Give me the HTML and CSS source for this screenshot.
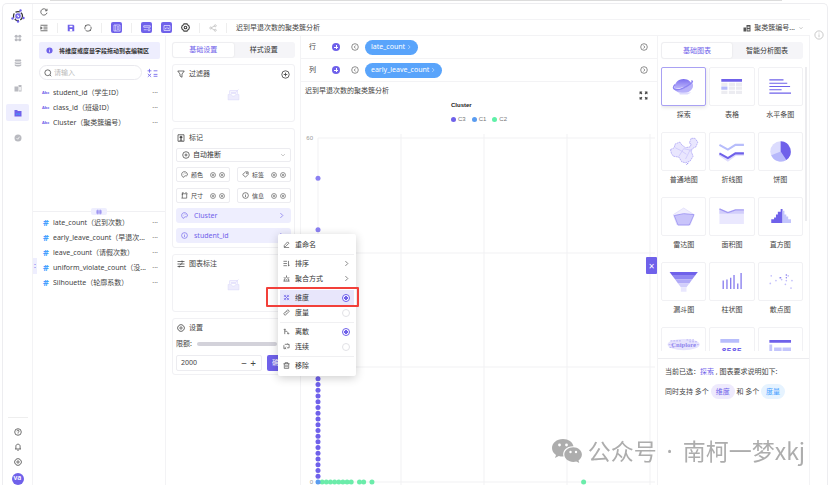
FILE: index.html
```html
<!DOCTYPE html>
<html lang="zh-CN">
<head>
<meta charset="utf-8">
<title>迟到早退次数的聚类簇分析</title>
<link rel="stylesheet" href="styles.css">
</head>
<body>
<svg class="defs" aria-hidden="true">
  <symbol id="i-plus" viewBox="0 0 16 16"><circle cx="8" cy="8" r="6.6"/><path d="M8 4.8v6.4M4.8 8h6.4"/></symbol>
  <symbol id="i-left" viewBox="0 0 16 16"><circle cx="8" cy="8" r="6.6"/><path d="M9.4 5 6.4 8l3 3"/></symbol>
  <symbol id="i-right" viewBox="0 0 16 16"><circle cx="8" cy="8" r="6.6"/><path d="M6.8 5l3 3-3 3"/></symbol>
  <symbol id="i-info" viewBox="0 0 16 16"><circle cx="8" cy="8" r="6.6"/><path d="M8 7v4.6M8 4.2v1.4"/></symbol>
  <symbol id="i-target" viewBox="0 0 16 16"><circle cx="8" cy="8" r="6.6"/><circle cx="8" cy="8" r="2"/></symbol>
  <symbol id="i-chev" viewBox="0 0 16 16"><path d="M5.5 2.5 11 8l-5.500 5.500"/></symbol>
  <symbol id="i-gear" viewBox="0 0 16 16"><path d="M5.300 1.500h5.400l.8 1.900 2.100.8L15 8l-1.400 3.800-2.100.8-.8 1.900H5.300l-.8-1.900-2.100-.8L1 8l1.400-3.800 2.100-.8z"/><circle cx="8" cy="8" r="2.300"/></symbol>
  <symbol id="i-palette" viewBox="0 0 16 16"><path d="M8 1.500C4 1.500 1.300 4.500 1.500 8s2 6 4.500 6.300c1.600.2 1.200-2.300 2.200-3 1.500-1 5 1 6.100-1.500C15.700 6 12.500 1.500 8 1.500z"/><path d="M4.500 7.500h1M7 4.500h1M10.500 5.500h1"/></symbol>
  <symbol id="i-tag" viewBox="0 0 16 16"><path d="M8 2h6v6l-6 6-6.500-6z"/><circle cx="11" cy="5" r="1"/></symbol>
  <symbol id="i-size" viewBox="0 0 16 16"><path d="M3 4h10v10H3zM3 7V1.500h3M10 1.500h3M13 4h2M1 14h2"/></symbol>
</svg>

<div class="topstrip"></div>
<div class="app">
  <nav class="rail" aria-label="主导航">
    <svg class="logo" viewBox="0 0 28 28"><circle cx="14" cy="14" r="9" fill="none" stroke="#333" stroke-width="2.500" stroke-dasharray="9 3"/><circle cx="14" cy="14" r="4" fill="none" stroke="#6f61ea" stroke-width="3"/><path d="m8 20 12-13" stroke="#6f61ea" stroke-width="1.500"/><circle cx="19" cy="3" r="2.400" fill="#6f61ea"/><circle cx="3" cy="19" r="2.400" fill="#6f61ea"/><circle cx="25" cy="18" r="2.400" fill="#6f61ea"/><circle cx="14" cy="25" r="2.400" fill="#6f61ea"/></svg>
    <a href="#" aria-label="应用"><svg viewBox="0 0 16 16" class="solid"><circle cx="4.500" cy="4.500" r="3.200"/><circle cx="11.500" cy="4.500" r="3.200"/><circle cx="4.500" cy="11.500" r="3.200"/><circle cx="11.500" cy="11.500" r="3.200"/></svg></a>
    <a href="#" aria-label="数据"><svg viewBox="0 0 16 16" class="solid"><rect x="1.500" y="1" width="13" height="4" rx="2"/><path d="M1.500 5.800c3 1.700 10 1.700 13 0v3.400c-3 1.700-10 1.700-13 0zM1.500 10.600c3 1.700 10 1.700 13 0V13c-2 2.500-11 2.500-13 0z"/></svg></a>
    <a href="#" aria-label="模型"><svg viewBox="0 0 16 16" class="solid"><path d="M1 5h7v10H1zM9 2h6v13H9z"/><path d="M10.500 6h3v7h-3z" fill="#fff"/></svg></a>
    <a href="#" aria-label="分析" class="active"><svg viewBox="0 0 16 16"><path d="M1 2h5l2 2h7v11H1z" fill="#6f61ea"/><path d="M5 12V9M8 12V8M11 12V9" stroke="#35a7ff" stroke-width="1.500"/></svg></a>
    <a href="#" aria-label="监控"><svg viewBox="0 0 16 16"><circle cx="8" cy="8" r="7" fill="#b9bac0"/><path d="m5 8 2.500 2.500L11 5.500" fill="none" stroke="#fff" stroke-width="1.500"/></svg></a>
    <div class="rail-foot">
      <a href="#" aria-label="帮助"><svg viewBox="0 0 16 16" class="line"><circle cx="8" cy="8" r="6.600"/><path d="M5.800 6.500c0-3 4.400-2.700 4.400-.2C10.200 8 8 7.800 8 9.700M8 11v1.400"/></svg></a>
      <a href="#" aria-label="通知"><svg viewBox="0 0 16 16" class="line"><path d="M2 12h12M3.800 12V6.500c0-5.500 8.400-5.500 8.400 0V12M6.500 14.500h3"/></svg></a>
      <a href="#" aria-label="设置"><svg class="line"><use href="#i-gear"/></svg></a>
      <a href="#" class="avatar">va</a>
    </div>
  </nav>

  <div class="main">
    <header class="refresh"><button aria-label="刷新"><svg viewBox="0 0 16 16" class="line"><path d="M13.500 5A6.300 6.300 0 1 0 14 9.500M14 1.500V5.500h-4"/></svg></button></header>
    <div class="toolbar">
      <button aria-label="折叠"><svg viewBox="0 0 16 16" class="line"><path d="M1 2.500h14M7 6.200h8M7 9.800h8M1 13.500h14M1.500 5.500 4.500 8l-3 2.500z"/></svg></button>
      <i></i>
      <button aria-label="保存"><svg viewBox="0 0 16 16"><path d="M1.500 1.500h11l2 2v11h-13z" fill="#6f61ea"/><path d="M5 3.500h6v3H5zM5.500 10h5v4.500h-5z" fill="#fff"/></svg></button>
      <button aria-label="撤销"><svg viewBox="0 0 16 16" class="line"><path d="M2 10A6.300 6.300 0 0 1 8 1.700M14 6a6.300 6.300 0 0 1-6 8.300M5 3.500 2 3M11 12.500l3 .5M8 1.700c3 0 4.500 1.200 5.500 3M8 14.300c-3 0-4.500-1.200-5.500-3"/></svg></button>
      <i></i>
      <button class="on" aria-label="数据面板"><svg viewBox="0 0 16 16" class="line"><path d="M2 2h12v12H2zM5.500 2v12M8 5.500h4M8 8h4M8 10.500h4"/></svg></button>
      <i></i>
      <button class="on" aria-label="设置面板"><svg viewBox="0 0 16 16" class="line"><path d="M1.500 3.500h13v3h-13zM1.500 11.500h6"/><circle cx="12" cy="11.500" r="2.200"/></svg></button>
      <button class="on" aria-label="图表面板"><svg viewBox="0 0 16 16" class="line"><path d="M2 3h12v10H2zM5 10.500v-3M8 10.500v-5M11 10.500v-3"/></svg></button>
      <button aria-label="选项"><svg class="line bold"><use href="#i-gear"/></svg></button>
      <i></i>
      <button aria-label="分享"><svg viewBox="0 0 16 16" class="line pale"><circle cx="3.500" cy="8" r="2"/><circle cx="12.500" cy="3.500" r="2"/><circle cx="12.500" cy="12.500" r="2"/><path d="m5.300 7 5.400-2.700M5.300 9l5.400 2.700"/></svg></button>
      <i></i>
      <span class="doc-title">迟到早退次数的聚类簇分析</span>
      <button class="dataset"><svg viewBox="0 0 16 16"><path d="M1 7h5v8H1zM7 2h8v13H7z" fill="#555"/><path d="M9 5h4v3H9zM9 10h4v3H9z" fill="#ddd"/></svg>聚类簇编号...<svg viewBox="0 0 16 16" class="line tiny"><path d="m4 6 4 4 4-4"/></svg></button>
    </div>

    <div class="columns">
      <section class="fields">
        <p class="hint"><svg viewBox="0 0 16 16"><circle cx="8" cy="8" r="7" fill="#6f61ea"/><path d="M8 7v5M8 4v1.500" stroke="#fff" stroke-width="1.600"/></svg>将维度或度量字段拖动到表编辑区</p>
        <div class="search-row">
          <label class="search"><svg viewBox="0 0 16 16" class="line"><circle cx="7.500" cy="7.500" r="5.800"/><path d="m12 12 2.500 2.500"/></svg><input type="search" placeholder="请输入" aria-label="搜索字段"></label>
          <button aria-label="新建计算字段"><svg viewBox="0 0 20 16"><path d="M1 4h7M4.500 .5v7M12 4h7M1.500 9.500l6 5.500M7.500 9.500l-6 5.500M12 10.500h7M12 14h7" stroke="#6f61ea" stroke-width="1.500"/></svg></button>
        </div>
        <ul class="field-list dims">
          <li><b>Abc</b><span>student_id（学生ID）</span><button aria-label="更多">···</button></li>
          <li><b>Abc</b><span>class_id（班级ID）</span><button aria-label="更多">···</button></li>
          <li><b>Abc</b><span>Cluster（聚类簇编号）</span><button aria-label="更多">···</button></li>
        </ul>
        <div class="splitter"><span class="grip"><svg viewBox="0 0 16 10"><path d="M3 3.500h10M3 6.500h10M6 1v8M10 1v8" stroke="#6f61ea"/></svg></span></div>
        <ul class="field-list meas">
          <li><b>#</b><span>late_count（迟到次数）</span><button aria-label="更多">···</button></li>
          <li><b>#</b><span>early_leave_count（早退次...</span><button aria-label="更多">···</button></li>
          <li><b>#</b><span>leave_count（请假次数）</span><button aria-label="更多">···</button></li>
          <li><b>#</b><span>uniform_violate_count（没...</span><button aria-label="更多">···</button></li>
          <li><b>#</b><span>Silhouette（轮廓系数）</span><button aria-label="更多">···</button></li>
        </ul>
        <button class="fold" aria-label="收起">:</button>
      </section>

      <section class="config">
        <div class="tabs"><button class="sel">基础设置</button><button>样式设置</button></div>
        <div class="card tall">
          <h2><svg viewBox="0 0 16 16" class="line"><path d="M1.500 2h13L10 8v6.500L6 12V8z"/></svg>过滤器<button aria-label="添加过滤器"><svg class="line"><use href="#i-plus"/></svg></button></h2>
          <svg class="empty" viewBox="0 0 24 22"><path d="M2 10h6l2 3h4l2-3h6v10H2z" fill="#eeecfd" stroke="#dcd9fa"/><path d="M5 9V3h14v6M17 5l4-4" fill="none" stroke="#dcd9fa" stroke-width="1.500"/><path d="M7 5h10v4H7z" fill="#e6e3fc"/></svg>
        </div>
        <div class="card marks">
          <h2><svg viewBox="0 0 16 16" class="line"><path d="M2 1.500h12v13H2zM8 9v5.500M5 14.500 8 11l3 3.500"/><circle cx="8" cy="6.500" r="2.200" fill="#444"/></svg>标记</h2>
          <label class="select"><svg class="line"><use href="#i-target"/></svg><select aria-label="图形类型"><option>自动推断</option></select><svg viewBox="0 0 16 16" class="line tiny"><path d="m3 5.500 5 5 5-5"/></svg></label>
          <div class="channels">
            <div><svg class="line"><use href="#i-palette"/></svg>颜色<button aria-label="添加颜色"><svg class="line"><use href="#i-plus"/></svg></button><button aria-label="颜色设置"><svg class="line"><use href="#i-target"/></svg></button></div>
            <div><svg class="line"><use href="#i-tag"/></svg>标签<button aria-label="添加标签"><svg class="line"><use href="#i-plus"/></svg></button><button aria-label="标签设置"><svg class="line"><use href="#i-target"/></svg></button></div>
            <div><svg class="line"><use href="#i-size"/></svg>尺寸<button aria-label="添加尺寸"><svg class="line"><use href="#i-plus"/></svg></button><button aria-label="尺寸设置"><svg class="line"><use href="#i-target"/></svg></button></div>
            <div><svg class="line"><use href="#i-info"/></svg>信息<button aria-label="添加信息"><svg class="line"><use href="#i-plus"/></svg></button><button aria-label="信息设置"><svg class="line"><use href="#i-target"/></svg></button></div>
          </div>
          <button class="pill"><svg class="line"><use href="#i-palette"/></svg><span>Cluster</span><svg class="line"><use href="#i-chev"/></svg></button>
          <div class="pill-wrap">
            <button class="pill"><svg class="line"><use href="#i-info"/></svg><span>student_id</span><svg class="line"><use href="#i-chev"/></svg></button>
            <div class="menu">
              <button><svg viewBox="0 0 16 16" class="line"><path d="m3 10 7.500-8 3 3L6 12.500l-3.500.5zM2 15h12"/></svg><span>重命名</span></button>
              <hr>
              <button><svg viewBox="0 0 16 16" class="line"><path d="M1 3h8M1 8h8M1 13h8M12.500 2v12M15 11l-2.500 3"/></svg><span>排序</span><svg class="line arrow"><use href="#i-chev"/></svg></button>
              <button><svg viewBox="0 0 16 16" class="line"><path d="M1 14h14M3 14V9l5-4 5 4v5M8 1v4M2 5l2 2M14 5l-2 2M6 11h4"/></svg><span>聚合方式</span><svg class="line arrow"><use href="#i-chev"/></svg></button>
              <hr>
              <label class="current"><svg viewBox="0 0 16 16" class="line"><path d="M2 2l12 12M14 2 2 14M6 2v3.500H2M10 2v3.500h4M6 14v-3.500H2M10 14v-3.500h4"/></svg><span>维度</span><input type="radio" name="role" checked></label>
              <label><svg viewBox="0 0 16 16" class="line"><path d="m1.500 11 9.500-9.500L14.500 5 5 14.500zM5 8l2 2M8 5l2 2"/></svg><span>度量</span><input type="radio" name="role"></label>
              <hr>
              <label><svg viewBox="0 0 16 16" class="line"><path d="M4 2v12M4 7c5 0 8 2 8 7M2 4l2-2 2 2M10 12l2 2 2-2"/></svg><span>离散</span><input type="radio" name="kind" checked></label>
              <label><svg viewBox="0 0 16 16" class="line"><path d="M4 3h10v8H9M5 13H2V5M7 8.500l-2.500 2.500L7 14M12 3l-2-2"/></svg><span>连续</span><input type="radio" name="kind"></label>
              <hr>
              <button><svg viewBox="0 0 16 16" class="line"><path d="M1 4h14M5 4V1.500h6V4M3 4v10.500h10V4M6.500 7v5M9.500 7v5"/></svg><span>移除</span></button>
            </div>
          </div>
        </div>
        <div class="card tall">
          <h2><svg viewBox="0 0 16 16" class="line"><path d="M1 3h14M1 8h14M1 13h14M10 1v4M4.500 11v4M11 6 6 10"/></svg>图表标注</h2>
          <svg class="empty" viewBox="0 0 24 22"><path d="M2 10h6l2 3h4l2-3h6v10H2z" fill="#eeecfd" stroke="#dcd9fa"/><path d="M5 9V3h14v6M17 5l4-4" fill="none" stroke="#dcd9fa" stroke-width="1.500"/><path d="M7 5h10v4H7z" fill="#e6e3fc"/></svg>
        </div>
        <div class="card limit">
          <h2><svg class="line"><use href="#i-gear"/></svg>设置</h2>
          <label class="range">限额:<input type="range" aria-label="限额"></label>
          <div class="amount"><label><input type="text" value="2000" aria-label="限额数值"><button aria-label="减少">−</button><button aria-label="增加">+</button></label><button class="ok">确定</button></div>
        </div>
      </section>

      <section class="canvas">
        <div class="shelf"><span>行</span><button aria-label="添加行字段"><svg class="line fill"><use href="#i-plus"/></svg></button><button aria-label="向左"><svg class="line"><use href="#i-left"/></svg></button><button class="chip">late_count<svg class="line"><use href="#i-chev"/></svg></button><button class="end" aria-label="向右"><svg class="line"><use href="#i-right"/></svg></button></div>
        <div class="shelf"><span>列</span><button aria-label="添加列字段"><svg class="line fill"><use href="#i-plus"/></svg></button><button aria-label="向左"><svg class="line"><use href="#i-left"/></svg></button><button class="chip">early_leave_count<svg class="line"><use href="#i-chev"/></svg></button><button class="end" aria-label="向右"><svg class="line"><use href="#i-right"/></svg></button></div>
        <div class="chart-head"><h1>迟到早退次数的聚类簇分析</h1><button aria-label="全屏"><svg viewBox="0 0 16 16"><path d="M1 6V1h5L4.500 2.500 6 4 4 6 2.500 4.500zM10 1h5v5l-1.500-1.500L12 6l-2-2 1.500-1.500zM1 10v5h5l-1.500-1.500L6 12l-2-2-1.500 1.500zM15 10v5h-5l1.500-1.500L10 12l2-2 1.500 1.500z" fill="#444"/></svg></button></div>
        <div class="legend"><strong>Cluster</strong><ul><li class="c3">C3</li><li class="c1">C1</li><li class="c2">C2</li></ul></div>
        <svg class="plot" viewBox="0 0 356 362" role="img" aria-label="聚类散点图">
          <path class="grid" d="M17 8v347M100 4v351M183 4v351M266 4v351M349 4v351M17 8h337M17 123h337M17 237h337M17 352h337"/>
          <g class="axis"><text x="12" y="10" text-anchor="end">60</text><text x="12" y="354" text-anchor="end">0</text><text x="17" y="361" text-anchor="middle">0</text><text x="100" y="361" text-anchor="middle">20</text><text x="183" y="361" text-anchor="middle">40</text><text x="266" y="361" text-anchor="middle">60</text><text x="349" y="361" text-anchor="middle">80</text></g>
          <g id="points"></g>
        </svg>
        <button class="close" aria-label="关闭图表面板">×</button>
      </section>

      <aside class="gallery">
        <div class="tabs"><button class="sel">基础图表</button><button>智能分析图表</button></div>
        <div class="tiles">
          <button class="picked"><svg viewBox="0 0 46 38"><defs><linearGradient id="g" x2="0" y2="1"><stop stop-color="#7b6ef0"/><stop offset="1" stop-color="#c3bdfb"/></linearGradient></defs><path d="M13 22c0-7 4-11 10-11 5 0 8 3 9 7z" fill="url(#g)"/><path d="M13 21c8 2 14-1 19-6 3 4-1 11-9 11-5 0-9-2-10-5z" fill="#b8b1fa"/><path d="M14 17c-5 5 1 7 8 4s13-8 9-8" fill="none" stroke="#8e84f3" stroke-width="1.500"/><path d="M18 25.500h13l-4 2h-8z" fill="#dcd9fd"/></svg><span>探索</span></button>
          <button><svg viewBox="0 0 46 38"><path d="M12 11h22v3H12z" fill="#6f61ea"/><path d="M12 15h6.500v3.500H12zM20 15h6.500v3.500H20zM27.500 15H34v3.500h-6.500zM20 19h6.500v3.500H20zM27.500 19H34v3.500h-6.500zM12 23.500h6.500V27H12zM20 23.500h6.500V27H20zM27.500 23.500H34V27h-6.500z" fill="#ececf1"/><path d="M12 19h6.500v3.500H12z" fill="#b7bdfb"/></svg><span>表格</span></button>
          <button><svg viewBox="0 0 46 38"><path d="M11 12h15M11 15.500h19M11 19h22M11 22.500h13M11 26h23" stroke="#6f61ea" stroke-width="1.200"/></svg><span>水平条图</span></button>
          <button><svg viewBox="0 0 46 38"><path d="m9 17 4-2 1-4 5-2 2 3 4 3 5-1 1-3-2-1 2-5h4l3 4-2 5-4 2-1 3 2 5-3 5-5 2-4-1-3-5-6-1-2-3z" fill="#e9e6fe" stroke="#aaa1f4" stroke-width=".8" stroke-dasharray="2 .6"/><path d="m14 15 6 3 6 4M18 24l5-8 9 2M30 17l-5 10" fill="none" stroke="#c5bffa" stroke-width=".7"/><path d="m28 31-2 2" stroke="#8e84f3"/></svg><span>普通地图</span></button>
          <button><svg viewBox="0 0 46 38"><path d="m10 12 9 5 8-5h9" fill="none" stroke="#b7bdfb" stroke-width="2.200"/><path d="m10 22 9 6 8-6h9" fill="none" stroke="#dedbfd" stroke-width="3"/><path d="m10 21 9 5 8-5h9" fill="none" stroke="#6f61ea" stroke-width="2.200"/></svg><span>折线图</span></button>
          <button><svg viewBox="0 0 46 38"><circle cx="23" cy="19" r="11" fill="#dcdcfe"/><path d="M23 19 13 23a11 11 0 0 0 16 5z" fill="#b7b8fb"/><path d="M23 19V8a11 11 0 0 1 6 20z" fill="#6f61ea"/></svg><span>饼图</span></button>
          <button><svg viewBox="0 0 46 38"><path d="m23 10 11 7-4 11H16l-4-11z" fill="#f1effe" stroke="#dcd9fa" stroke-width=".7"/><path d="m13 18 10-2 11 1-5 11H17z" fill="#c9c4fa" stroke="#a39af3"/></svg><span>雷达图</span></button>
          <button><svg viewBox="0 0 46 38"><path d="m10 11 9 5 8-4h9v15H10z" fill="#eae8fe"/><path d="m10 11 9 5 8-4h9v4H10z" fill="#d2cefb"/><path d="m10 11 9 4 8-3h9" fill="none" stroke="#a39af3" stroke-width="1.500"/></svg><span>面积图</span></button>
          <button><svg viewBox="0 0 46 38"><path d="M13 26v-4h3v-2h2v-3h2v-3h3v-3h2v15z" fill="#6f61ea"/><path d="M25 26V13h2v4h2v2h2v3h3v4z" fill="#c3c5fc"/></svg><span>直方图</span></button>
          <button><svg viewBox="0 0 46 38"><path d="M8 9h30l-3 4H11z" fill="#6f61ea"/><path d="M11 13h24l-3 4H14z" fill="#9188f2"/><path d="M14 17h18l-3 4H17z" fill="#b1aaf7"/><path d="M17 21h12l-3 4h-6z" fill="#d2cefb"/><path d="M20 25h6v5h-6z" fill="#e9e7fe"/></svg><span>漏斗图</span></button>
          <button><svg viewBox="0 0 46 38"><path d="M14 18v9M18 17v10M22 15v12M25.500 12v15M29.500 21v6M33 10v17" stroke="#7d71ec" stroke-width="1.300"/></svg><span>柱状图</span></button>
          <button><svg viewBox="0 0 46 38"><g fill="#c3c0fb"><circle cx="13" cy="13" r=".9"/><circle cx="12" cy="21" r=".9"/><circle cx="18" cy="18" r=".9"/><circle cx="22" cy="15" r=".9"/><circle cx="24" cy="17" r=".9"/><circle cx="29" cy="18" r=".9"/><circle cx="28" cy="22" r=".9"/><circle cx="35" cy="18" r=".9"/><circle cx="34" cy="26" r=".9"/><circle cx="31" cy="13" r=".9"/></g><g fill="#7d71ec"><circle cx="29" cy="12" r=".8"/><circle cx="23" cy="15" r=".7"/><circle cx="29" cy="15" r=".7"/></g></svg><span>散点图</span></button>
          <button aria-label="词云"><svg viewBox="0 0 46 38"><ellipse cx="23" cy="17" rx="17" ry="6" fill="#e6e3fd"/><path d="M9 13h12M26 12h8M29 14h8M7 17h5M34 17h5M8 20h6" stroke="#b7b0f7" stroke-dasharray="2 1"/><text x="23" y="20" text-anchor="middle" class="cloud">Cniplore</text></svg></button>
          <button aria-label="指标卡"><svg viewBox="0 0 46 38"><path d="M11 11h20v4H11z" fill="#b7bdfb"/><text x="23" y="27" text-anchor="middle" class="digits">8585</text></svg></button>
          <button aria-label="透视表"><svg viewBox="0 0 46 38"><path d="M11 12h23v3H11z" fill="#6f61ea"/><path d="M11 17h3v8h-3zM16 20h8v4h-8zM25 20h9v4h-9z" fill="#c3c5fc"/></svg></button>
        </div>
        <div class="rules"><p>当前已选：<em>探索</em>&nbsp;, 图表要求说明如下:</p><p>同时支持 多个 <span class="tag dim">维度</span> 和 多个 <span class="tag mea">度量</span></p></div>
      </aside>
    </div>
  </div>
  <div class="edge"><button aria-label="信息"><svg class="line"><use href="#i-info"/></svg></button></div>
</div>
<div class="watermark"><svg viewBox="0 0 30 24"><path d="M11 0C4.500 0 0 4 0 9c0 3 1.500 5.200 4 7l-1 3 3.800-2c1.700.5 3.200.6 4.700.5C10 11.500 14.500 7 21.500 7.200 20.500 3 16.500 0 11 0z"/><path d="M21.300 8.300c-5 0-9 3.300-9 7.300s4 7.300 9 7.300c1.100 0 2.100-.2 3-.4l3 1.500-.8-2.600c2-1.400 3.400-3.400 3.400-5.800 0-4-3.700-7.300-8.600-7.300z"/><g fill="#fff"><circle cx="7.500" cy="6" r="1.400"/><circle cx="14.500" cy="6" r="1.400"/><circle cx="18.500" cy="13" r="1.200"/><circle cx="24" cy="13" r="1.200"/></g></svg><span>公众号<span class="dot"> · </span>南柯一梦xkj</span></div>
<script src="chart.js"></script>
</body>
</html>
```

FILE: styles.css
```css
* { box-sizing: border-box; }
body { margin: 0; height: 100vh; overflow: hidden; display: flex; flex-direction: column; background: #fff; color: #444; font: 7px/10px "Noto Sans", "Noto Sans CJK SC", sans-serif; }
button, input, select { font: inherit; color: inherit; border: 0; background: none; padding: 0; margin: 0; min-width: 0; }
button { display: flex; align-items: center; justify-content: center; }
a { color: inherit; text-decoration: none; }
ul, h1, h2, p { margin: 0; padding: 0; list-style: none; font-size: 7px; font-weight: 400; }
svg { display: block; width: 8px; height: 8px; flex: none; }
.defs { position: absolute; width: 0; height: 0; }
.line { fill: none; stroke: #444; stroke-width: 1.5; }
.line.bold { stroke-width: 2; width: 9px; height: 9px; }
.line.pale { stroke: #bbb; }
.line.tiny { width: 6px; height: 6px; stroke: #999; }
.solid { fill: #b9bac0; }

.topstrip { flex: none; height: 1px; margin: 0 48px 2px 50px; background: #dcdcdc; }
.app { flex: 1; min-height: 0; display: flex; margin: 0 2px; border: 1px solid #ededf0; border-bottom: 0; border-radius: 5px 5px 0 0; }
.rail { width: 30px; flex: none; display: flex; flex-direction: column; align-items: center; border-right: 1px solid #f3f3f5; padding-top: 5px; }
.rail > a { width: 23px; height: 17px; margin-bottom: 8px; border-radius: 2px; display: grid; place-items: center; }
.rail > a.active { background: #eeeefe; }
.logo { width: 14px; height: 14px; margin-bottom: 6px; }
.rail-foot { margin-top: auto; width: 20px; border-top: 1px solid #eee; display: flex; flex-direction: column; align-items: center; gap: 7px; padding-top: 10px; }
.avatar { width: 12px; height: 12px; border-radius: 50%; background: #6f61ea; color: #fff; text-align: center; font-weight: 600; }

.main { flex: 1; min-width: 0; display: flex; flex-direction: column; }
.refresh { height: 16px; flex: none; padding-left: 7px; display: flex; border-bottom: 1px solid #f3f3f5; }
.toolbar { height: 16px; flex: none; display: flex; align-items: center; gap: 9px; padding: 0 6px 0 7px; border-bottom: 1px solid #f3f3f5; }
.toolbar i { width: 1px; height: 10px; background: #eee; }
.toolbar .on { width: 11px; height: 11px; border-radius: 2px; background: #6f61ea; }
.toolbar .on .line { stroke: #e8e6ff; }
.dataset { margin-left: auto; gap: 3px; }
.columns { flex: 1; min-height: 0; display: flex; }

.fields { position: relative; width: 133px; flex: none; padding: 6px 5px 0 6px; border-right: 1px solid #f3f3f5; }
.hint { height: 17px; display: flex; align-items: center; gap: 6px; padding-left: 7px; background: #eeeefe; color: #333; font-size: 6px; font-weight: 700; border-radius: 2px; white-space: nowrap; }
.hint svg { width: 7px; height: 7px; }
.search-row { display: flex; align-items: center; gap: 5px; margin-top: 6px; }
.search { flex: 1; min-width: 0; height: 15px; border: 1px solid #e9e9ee; border-radius: 8px; display: flex; align-items: center; gap: 2px; padding: 0 4px; }
.search input { flex: 1; width: 0; outline: 0; height: 12px; appearance: none; }
.search input::placeholder { color: #bbb; }
.search-row button { padding-right: 2px; }
.search-row button svg { width: 11px; height: 10px; }
.field-list li { display: flex; align-items: center; height: 15px; gap: 3px; padding: 0 2px 0 3px; white-space: nowrap; }
.field-list span { flex: 1; min-width: 0; overflow: hidden; }
.field-list b { width: 8px; flex: none; color: #6f61ea; font: 700 4px/8px "Noto Sans", sans-serif; }
.field-list button { color: #777; }
.field-list.meas b { color: #45a0ff; font-size: 9px; padding-left: 1px; }
.dims { padding-top: 5px; height: 128px; }
.splitter { height: 7px; display: grid; place-items: center; margin: 0 -5px 0 -6px; background: linear-gradient(#f0f0f3, #f0f0f3) center/100% 1px no-repeat; }
.grip { width: 16px; height: 7px; background: #eeeefe; border-radius: 2px; display: grid; place-items: center; }
.grip svg { width: 10px; height: 6px; }
.fold { position: absolute; left: 0; top: 222px; width: 4px; height: 16px; background: #eeeefe; color: #6f61ea; }

.config { width: 135px; flex: none; padding: 6px 5px 0 6px; display: flex; flex-direction: column; gap: 6px; border-right: 1px solid #f3f3f5; }
.tabs { display: grid; grid-template-columns: 1fr 1fr; height: 16px; flex: none; padding: 1px; background: #f5f5f8; border-radius: 3px; color: #333; }
.tabs .sel { background: #fff; color: #6f61ea; border-radius: 2px; box-shadow: 0 0 2px #ddd; }
.card { border: 1px solid #f1f1f4; border-radius: 3px; padding: 4px 3px 3px; }
.card h2 { display: flex; align-items: center; gap: 4px; padding: 0 1px; height: 10px; }
.card h2 button { margin-left: auto; }
.card h2 button svg { width: 9px; height: 9px; }
.tall { height: 58px; }
.empty { width: 13px; height: 12px; margin: 10px auto 0; }
.marks { display: flex; flex-direction: column; gap: 5px; height: 120px; }
.select { height: 14px; flex: none; display: flex; align-items: center; gap: 3px; padding: 0 4px 0 5px; border: 1px solid #ececf0; border-radius: 2px; }
.select select { flex: 1; appearance: none; height: 12px; color: #333; }
.channels { display: grid; grid-template-columns: 1fr 1fr; gap: 6px 7px; }
.channels > div { height: 15px; display: flex; align-items: center; gap: 3px; padding: 0 4px; border: 1px solid #ececf0; border-radius: 2px; font-size: 6px; }
.channels > div > svg { width: 7px; height: 7px; }
.channels button svg { width: 6px; height: 6px; }
.channels button:nth-of-type(1) { margin-left: auto; }
.pill { width: 100%; height: 15px; flex: none; gap: 6px; padding: 0 6px 0 5px; background: #eeeefe; color: #6f61ea; border-radius: 3px; }
.pill span { flex: 1; text-align: left; }
.pill .line { stroke: #6f61ea; width: 7px; height: 7px; }
.pill-wrap { position: relative; }
.menu { position: absolute; z-index: 5; left: 102px; top: 6px; width: 78px; padding: 3px 2px; background: #fff; border-radius: 2px; box-shadow: 0 2px 10px #0003; color: #333; }
.menu button, .menu label { position: relative; width: 100%; height: 15px; display: flex; align-items: center; gap: 5px; padding: 0 4px 0 3px; }
.menu span { flex: 1; text-align: left; }
.menu hr { margin: 2px 0 1px; border: 0; border-top: 1px solid #f0f0f2; }
.menu svg { width: 7px; height: 7px; }
.menu .current { background: #e8e6fb; }
.menu .current .line { stroke: #6f61ea; }
.menu .current::after { content: ""; position: absolute; inset: -3px -5px -2px -14px; border: 2px solid #f2403a; border-radius: 1px; }
.menu input { appearance: none; width: 8px; height: 8px; border: 1px solid #e2e2e6; border-radius: 50%; }
.menu input:checked { border-color: #6f61ea; background: radial-gradient(#6f61ea 40%, #fff 50%); }
.limit h2 { margin-bottom: 5px; }
.range { display: flex; align-items: center; gap: 5px; height: 11px; }
.range input { appearance: none; flex: 1; height: 4px; background: #d3d2da; border-radius: 2px; margin-right: 14px; }
.range input::-webkit-slider-thumb { appearance: none; width: 0; }
.amount { display: flex; gap: 5px; margin-top: 6px; }
.amount label { width: 86px; height: 16px; display: flex; align-items: center; gap: 1px; padding: 0 4px; border: 1px solid #ececf0; border-radius: 2px; }
.amount label input { flex: 1; }
.amount label button { font-size: 10px; width: 8px; }
.amount .ok { flex: 1; background: #6f61ea; color: #fff; border-radius: 2px; }

.canvas { position: relative; flex: 1; min-width: 0; display: flex; flex-direction: column; border-right: 1px solid #f3f3f5; }
.shelf { height: 23px; flex: none; display: flex; align-items: center; padding: 0 9px 0 8px; border-bottom: 1px solid #f3f3f5; }
.shelf > span { width: 23px; }
.shelf > button { margin-right: 11px; }
.shelf .line { stroke-width: 1.2; }
.shelf button:first-of-type { background: linear-gradient(#fff, #fff) center/4px 1px no-repeat, linear-gradient(#fff, #fff) center/1px 4px no-repeat, #6f61ea; border-radius: 50%; }
.shelf button:first-of-type svg { opacity: 0; }
.shelf .chip { height: 15px; margin-left: -5px; padding: 0 6px; gap: 1px; border-radius: 8px; background: #59a4fb; color: #fff; }
.chip .line { width: 6px; height: 6px; stroke: #fff; }
.shelf .end { margin: 0 0 0 auto; }
.chart-head { flex: none; display: flex; justify-content: space-between; padding: 4px 9px 0 4px; height: 18px; }
.chart-head button { align-self: end; }
.chart-head button svg { width: 9px; height: 9px; }
.legend { flex: none; width: fit-content; margin: 0 auto; font: 6px/10px "Liberation Sans", sans-serif; height: 30px; }
.legend strong { color: #222; display: block; }
.legend ul { display: flex; gap: 6px; font-size: 6px; margin-top: 4px; }
.legend li { display: flex; align-items: center; gap: 2px; color: #777; }
.legend li::before { content: ""; width: 5px; height: 5px; border-radius: 50%; }
.c3::before { background: #6f61ea; }
.c1::before { background: #5a9cf0; }
.c2::before { background: #5ff0a8; }
.plot { width: 100%; height: auto; overflow: visible; }
.grid { stroke: #f1f1f3; fill: none; }
.axis text { font: 6px "Liberation Sans", sans-serif; fill: #999; }
.p3 { fill: #6f61ea; }
.p3.far { fill: #8b80f2; }
.p1 { fill: #5a9cf0; }
.p2 { fill: #6becaa; }
.close { position: absolute; right: 0; top: 221px; width: 11px; height: 17px; border-radius: 1px; background: #6f61ea; color: #fff; font-size: 10px; }

.gallery { width: 152px; flex: none; padding: 6px 6px 0 3px; display: flex; flex-direction: column; border-right: 1px solid #f3f3f5; }
.gallery .tabs { height: 17px; }
.tiles { display: grid; grid-template-columns: repeat(3, 1fr); gap: 7px 3px; height: 284px; flex: none; overflow: hidden; align-content: start; margin: 8px -4px 0 0; padding-right: 4px; background: linear-gradient(#ececef, #ececef) right top/2px 154px no-repeat; }
.tiles button { flex-direction: column; gap: 4px; justify-content: start; height: 58px; }
.tiles button > svg { width: 100%; height: 39px; border: 1px solid #f1f1f4; border-radius: 2px; background: #fff; }
.tiles .picked > svg { border-color: #a9a1f3; box-shadow: 0 1px 4px #0002; }
.cloud { font: 700 7px "Liberation Serif", serif; fill: #9188ee; }
.digits { font: 700 9px "Liberation Mono", monospace; fill: #6f61ea; }
.rules { border-top: 1px solid #ececef; margin: 7px -6px 0 -3px; padding: 8px 7px; }
.rules p { height: 10px; margin-bottom: 10px; white-space: nowrap; }
.rules em { font-style: normal; color: #6f61ea; }
.tag { padding: 3px 5px; border-radius: 8px; }
.dim { background: #eeeafd; color: #6f61ea; }
.mea { background: #e6f3ff; color: #45a0ff; }
.edge { width: 17px; flex: none; display: flex; justify-content: center; align-items: start; padding-top: 26px; }
.edge svg { width: 10px; height: 10px; stroke: #aaa; stroke-width: 1; }

.watermark { position: fixed; right: 25px; bottom: 18px; display: flex; align-items: center; gap: 6px; color: #adadad; font: 400 23px/32px "Noto Sans CJK SC", sans-serif; white-space: nowrap; }
.watermark svg { width: 30px; height: 24px; fill: #adadad; }
.dot { font-family: "Noto Sans", sans-serif; margin: 0 4px; }
```

FILE: chart.js
```js
// Scatter plot: horizontal early_leave_count, vertical late_count.
const group = document.getElementById("points");
const stepX = 83 / 20;
const stepY = 344 / 60;

function plot(x, y, cls) {
  const dot = document.createElementNS("http://www.w3.org/2000/svg", "circle");
  dot.setAttribute("cx", 17 + x * stepX);
  dot.setAttribute("cy", 352 - y * stepY);
  dot.setAttribute("r", 2.5);
  dot.setAttribute("class", cls);
  group.appendChild(dot);
}

[44, 53].forEach(y => plot(0, y, "p3 far"));
for (let y = 1; y <= 20; y++) plot(0, y, "p3");
[1, 2, 3, 4, 5, 6, 7, 8, 10, 11, 13, 64].forEach(x => plot(x, 0, "p2"));
plot(0, 0, "p1");
```
